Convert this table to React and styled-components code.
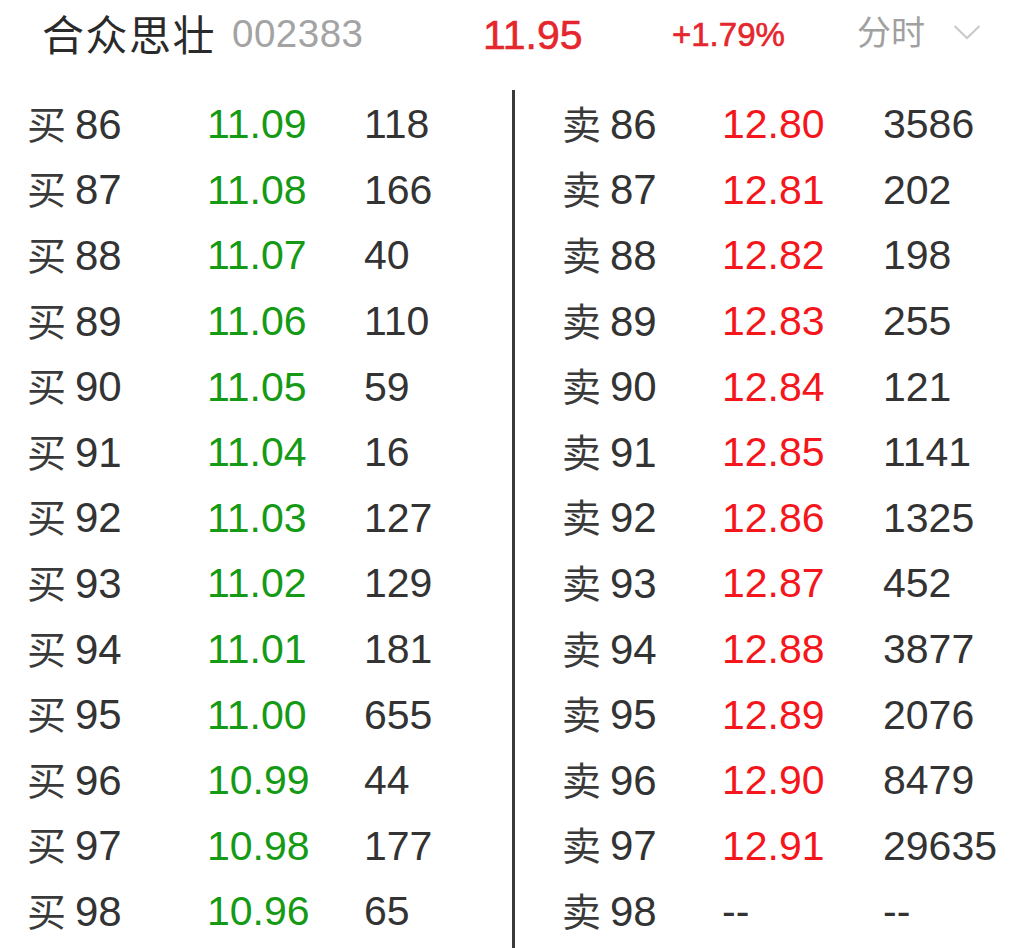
import React from "react";
import styled, { createGlobalStyle } from "styled-components";

const Global = createGlobalStyle`
  html, body { margin: 0; padding: 0; background: #fff; }
  body { font-family: "Liberation Sans", "Noto Sans CJK SC", sans-serif; }
`;

const Page = styled.div`
  width: 1024px;
  height: 948px;
  overflow: hidden;
  background: #fff;
  display: flex;
  flex-direction: column;
`;

const Header = styled.div`
  height: 90px;
  display: grid;
  grid-template-columns: 441px 189px 185px 1fr;
  align-items: center;
  padding-left: 42px;
  box-sizing: border-box;
`;

const Title = styled.div`
  display: flex;
  align-items: center;
  gap: 16px;
  padding-bottom: 26px;
`;

const Name = styled.span`
  font-family: "Noto Sans CJK SC", sans-serif;
  font-size: 42px;
  color: #2a2a2a;
  letter-spacing: 1.5px;
`;

const Code = styled.span`
  font-size: 38.5px;
  color: #a3a3a3;
  letter-spacing: 0.5px;
  padding-top: 4px;
`;

const Quote = styled.span`
  font-size: ${(p) => p.$size}px;
  font-weight: 500;
  color: #e5262d;
  padding-bottom: 20px;
  -webkit-text-stroke: 0.6px #e5262d;
`;

const Tab = styled.div`
  display: flex;
  align-items: center;
  gap: 28px;
  padding-bottom: 30px;
  font-family: "Noto Sans CJK SC", sans-serif;
  font-size: 34px;
  color: #a0a0a0;
`;

const Arrow = styled.svg`
  margin-top: 4px;
`;

const Body = styled.div`
  flex: 1;
  display: grid;
  grid-template-columns: 512px 3px 1fr;
`;

const Divider = styled.div`
  background: #3a3a3a;
`;

const Column = styled.div`
  padding-top: 2px;
  display: flex;
  flex-direction: column;
`;

const Row = styled.div`
  height: 65.6px;
  display: grid;
  grid-template-columns: ${(p) => p.$cols};
  padding-left: ${(p) => p.$pad}px;
  align-items: center;
  font-size: 41px;
  color: #333;
  white-space: nowrap;
`;

const Label = styled.span`
  display: flex;
  align-items: center;
  font-size: 42px;
`;

const Side = styled.span`
  font-family: "Noto Sans CJK SC", sans-serif;
  font-size: 39px;
  color: #3a3a3a;
  margin-right: 9px;
  padding-bottom: 6px;
`;

const Price = styled.span`
  color: ${(p) => (p.$empty ? "#333" : p.$buy ? "#149a14" : "#f5161c")};
`;

const Qty = styled.span`
  color: #333;
`;

const buys = [
  ["86", "11.09", "118"],
  ["87", "11.08", "166"],
  ["88", "11.07", "40"],
  ["89", "11.06", "110"],
  ["90", "11.05", "59"],
  ["91", "11.04", "16"],
  ["92", "11.03", "127"],
  ["93", "11.02", "129"],
  ["94", "11.01", "181"],
  ["95", "11.00", "655"],
  ["96", "10.99", "44"],
  ["97", "10.98", "177"],
  ["98", "10.96", "65"],
];

const sells = [
  ["86", "12.80", "3586"],
  ["87", "12.81", "202"],
  ["88", "12.82", "198"],
  ["89", "12.83", "255"],
  ["90", "12.84", "121"],
  ["91", "12.85", "1141"],
  ["92", "12.86", "1325"],
  ["93", "12.87", "452"],
  ["94", "12.88", "3877"],
  ["95", "12.89", "2076"],
  ["96", "12.90", "8479"],
  ["97", "12.91", "29635"],
  ["98", "--", "--"],
];

function Chevron() {
  return (
    <Arrow width="28" height="16" viewBox="0 0 28 16">
      <path d="M1.5 2 L14 14 L26.5 2" fill="none" stroke="#c9c9c9" strokeWidth="2" />
    </Arrow>
  );
}

function Book({ rows, buy, cols, pad }) {
  return (
    <Column>
      {rows.map(([lvl, price, qty]) => (
        <Row key={lvl} $cols={cols} $pad={pad}>
          <Label>
            <Side>{buy ? "买" : "卖"}</Side>
            {lvl}
          </Label>
          <Price $buy={buy} $empty={price === "--"}>{price}</Price>
          <Qty>{qty}</Qty>
        </Row>
      ))}
    </Column>
  );
}

export default function App() {
  return (
    <Page>
      <Global />
      <Header>
        <Title>
          <Name>合众思壮</Name>
          <Code>002383</Code>
        </Title>
        <Quote $size={41}>11.95</Quote>
        <Quote $size={33}>+1.79%</Quote>
        <Tab>
          <span>分时</span>
          <Chevron />
        </Tab>
      </Header>
      <Body>
        <Book rows={buys} buy cols="180px 157px 1fr" pad={27} />
        <Divider />
        <Book rows={sells} cols="160px 161px 1fr" pad={47} />
      </Body>
    </Page>
  );
}
